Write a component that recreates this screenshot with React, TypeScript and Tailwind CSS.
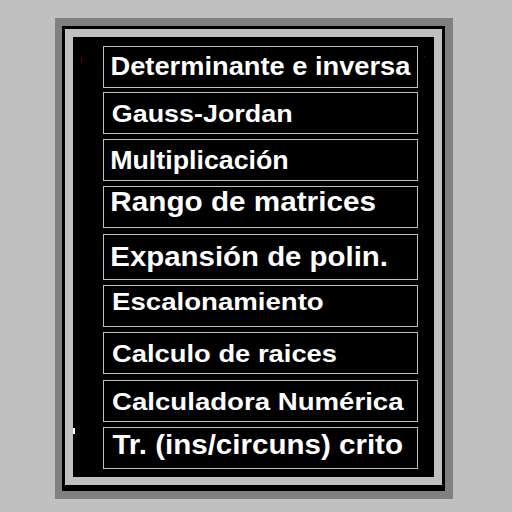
import React from "react";

type Item = { label: string; cls: string; box: string };

const items: Item[] = [
  { label: "Determinante e inversa", box: "h-[42px] mt-0", cls: "text-[25px] pt-[7px] pl-[6px] scale-x-[1.09]" },
  { label: "Gauss-Jordan", box: "h-[42px] mt-[4px]", cls: "text-[24px] pt-[9px] pl-[7px] scale-x-[1.12]" },
  { label: "Multiplicación", box: "h-[42px] mt-[5px]", cls: "text-[26px] pt-[7px] pl-[6px] scale-x-[1.03]" },
  { label: "Rango de matrices", box: "h-[42px] mt-[5px]", cls: "text-[28px] pt-[1px] pl-[6px] scale-x-[1.06]" },
  { label: "Expansión de polin.", box: "h-[46px] mt-[6px]", cls: "text-[28px] pt-[8px] pl-[6px] scale-x-[1.05]" },
  { label: "Escalonamiento", box: "h-[42px] mt-[5px]", cls: "text-[24px] pt-[4px] pl-[7px] scale-x-[1.15]" },
  { label: "Calculo de raices", box: "h-[42px] mt-[5px]", cls: "text-[24px] pt-[9px] pl-[7px] scale-x-[1.14]" },
  { label: "Calculadora Numérica", box: "h-[42px] mt-[6px]", cls: "text-[24px] pt-[9px] pl-[7px] scale-x-[1.15]" },
  { label: "Tr. (ins/circuns) crito", box: "h-[42px] mt-[5px]", cls: "text-[28px] pt-[3px] pl-[8px] scale-x-[1.055]" },
];

export default function App() {
  return (
    <div className="w-[512px] h-[512px] bg-[#c0c0c0] pt-[18px] pl-[55px]" style={{ fontFamily: '"Liberation Sans", Arial, sans-serif' }}>
      <div className="w-[398px] h-[481px] bg-[#808080] pl-[7px] pt-[8px] pr-[8px] pb-[8px]">
        <div className="w-full h-full bg-black pl-[3px] pt-[3px] pr-[3px] pb-[6px]">
          <div className="w-full h-full bg-[#c0c0c0] p-[8px]">
            <div className="relative w-[361px] h-[440px] bg-black pt-[9px] pl-[30px]">
              <span className="absolute left-[8px] top-[20px] w-[1px] h-[6px] bg-[#5a0000]" />
              <span className="absolute left-[351px] top-[19px] w-[1px] h-[1px] bg-[#1a1aa0]" />
              <span className="absolute left-[0px] top-[391px] w-[2px] h-[6px] bg-white" />
              <div className="flex flex-col w-[315px]">
                {items.map((it) => (
                  <div key={it.label} className={`${it.box} border border-[#c0c0c0] overflow-hidden`}>
                    <div className={`${it.cls} origin-left whitespace-pre font-bold text-white leading-none`}>
                      {it.label}
                    </div>
                  </div>
                ))}
              </div>
            </div>
          </div>
        </div>
      </div>
    </div>
  );
}
